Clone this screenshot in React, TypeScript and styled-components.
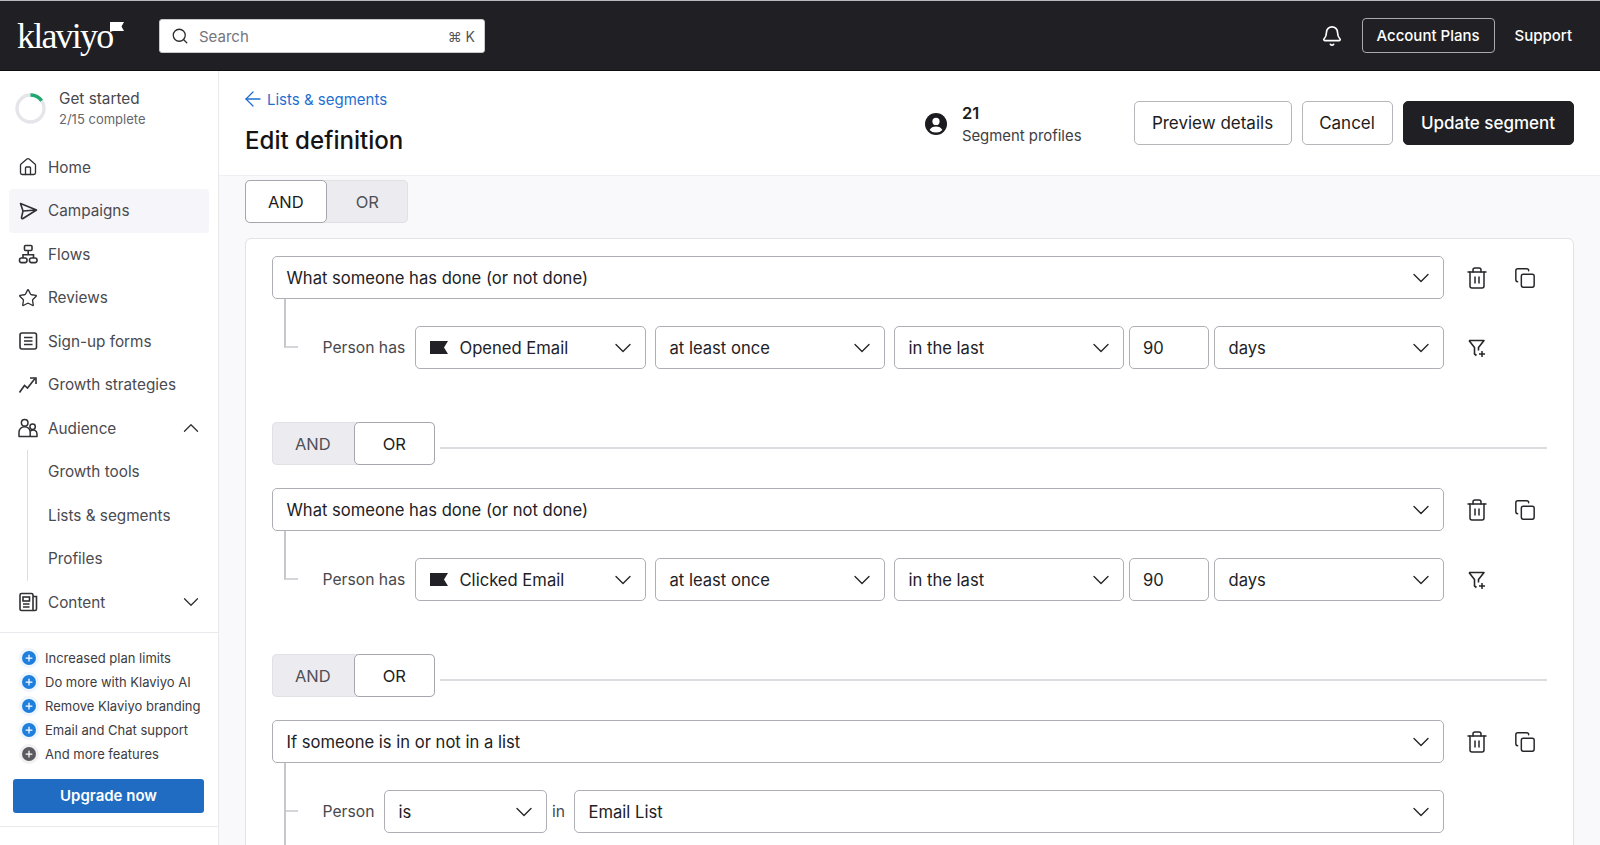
import React from "react";
import styled, { createGlobalStyle } from "styled-components";
import {
  ArrowLeft,
  Bell,
  ChevronDown,
  ChevronUp,
  Copy,
  House,
  Plus,
  Search,
  Star,
  Trash2,
} from "lucide-react";

const GlobalStyle = createGlobalStyle`
  html, body {
    margin: 0;
    padding: 0;
    height: 100%;
    overflow: hidden;
    background: #fff;
  }
  body {
    font-family: Inter, "Noto Sans", "Liberation Sans", sans-serif;
    color: #1c1c20;
    -webkit-font-smoothing: antialiased;
  }
  * { box-sizing: border-box; }
`;

const Page = styled.div`
  width: 1600px;
  height: 845px;
  overflow: hidden;
  display: flex;
  flex-direction: column;
`;

/* top bar */
const TopBar = styled.header`
  height: 71px;
  flex: none;
  background: #1f1f24;
  border-top: 1px solid #b9b9bd;
  border-bottom: 1px solid #0e0e10;
  display: flex;
  align-items: center;
  padding: 0 28px 0 17px;
`;

const Logo = styled.div`
  width: 142px;
  flex: none;
  display: flex;
  align-items: flex-start;
  color: #fff;
  font-family: "Liberation Serif", serif;
  font-size: 36px;
  letter-spacing: -1.8px;
  line-height: 40px;
  svg {
    margin: 6px 0 0 -2px;
  }
`;

const SearchBox = styled.div`
  width: 326px;
  height: 34px;
  background: #fff;
  border: 1px solid #c9c9ce;
  border-radius: 3px;
  display: flex;
  align-items: center;
  gap: 10px;
  padding: 1px 9px 0 11px;
  color: #75757c;
  font-size: 15px;
  svg {
    color: #2a2a2e;
  }
`;

const SearchHint = styled.span`
  margin-left: auto;
  font-size: 14px;
  color: #55555b;
`;

const TopActions = styled.div`
  margin-left: auto;
  display: flex;
  align-items: center;
  color: #fff;
  font-size: 15px;
  font-weight: 500;
`;

const PlansButton = styled.div`
  width: 133px;
  height: 35px;
  margin: 0 20px 0 19px;
  display: flex;
  align-items: center;
  justify-content: center;
  border: 1.5px solid #a9a9ae;
  border-radius: 4px;
`;

/* app body */
const Body = styled.div`
  flex: 1;
  min-height: 0;
  display: flex;
`;

const Sidebar = styled.aside`
  width: 219px;
  flex: none;
  background: #fff;
  border-right: 1px solid #e9e9ed;
  display: flex;
  flex-direction: column;
`;

const GetStarted = styled.div`
  height: 74.5px;
  flex: none;
  display: flex;
  align-items: center;
  gap: 13px;
  padding: 1px 0 0 15px;
`;

const GetStartedTitle = styled.div`
  font-size: 15.3px;
  line-height: 20px;
  color: #47474d;
`;

const GetStartedSub = styled.div`
  font-size: 13px;
  line-height: 20px;
  color: #66666c;
`;

const Nav = styled.nav`
  margin: 0 9px;
`;

const NavItem = styled.div<{ $active?: boolean }>`
  height: 43.5px;
  display: flex;
  align-items: center;
  gap: 10px;
  padding: 0 9px;
  border-radius: 4px;
  font-size: 15.3px;
  color: #4a4a50;
  background: ${(p) => (p.$active ? "#f6f6fa" : "transparent")};
  svg {
    flex: none;
    color: #303035;
  }
`;

const NavChevron = styled.span`
  margin-left: auto;
  display: flex;
  margin-right: -4px;
`;

const SubNav = styled.div`
  margin-left: 18px;
  padding-left: 20px;
  border-left: 1px solid #dedee2;
`;

const SubItem = styled.div`
  height: 43.5px;
  display: flex;
  align-items: center;
  font-size: 15.3px;
  color: #4a4a50;
`;

const PlanBox = styled.div`
  margin-top: 7.5px;
  padding: 13px 14px 13px 13px;
  border-top: 1px solid #e9e9ed;
  border-bottom: 1px solid #e9e9ed;
`;

const PlanRow = styled.div`
  height: 24px;
  display: flex;
  align-items: center;
  gap: 9px;
  padding-left: 10px;
  margin-left: -1px;
  font-size: 13px;
  color: #3c3c42;
  white-space: nowrap;
`;

const PlanDot = styled.span<{ $muted?: boolean }>`
  width: 14px;
  height: 14px;
  flex: none;
  border-radius: 50%;
  display: flex;
  align-items: center;
  justify-content: center;
  color: #fff;
  background: ${(p) => (p.$muted ? "#5a5a60" : "#1f7fdc")};
  box-shadow: 0 0 0 3px ${(p) => (p.$muted ? "#f1f1f3" : "#eef5fd")};
`;

const UpgradeButton = styled.div`
  height: 34px;
  margin-top: 13px;
  background: #1f6cc2;
  border-radius: 3px;
  color: #fff;
  font-size: 15px;
  font-weight: 600;
  display: flex;
  align-items: center;
  justify-content: center;
`;

/* main */
const Main = styled.main`
  flex: 1;
  min-width: 0;
  background: #f9f9fc;
  display: flex;
  flex-direction: column;
`;

const Header = styled.div`
  height: 105px;
  flex: none;
  background: #fff;
  border-bottom: 1px solid #efeff3;
  display: flex;
  align-items: flex-start;
  padding: 0 26.5px 0 26px;
`;

const BackLink = styled.div`
  display: flex;
  align-items: center;
  gap: 2px;
  margin: 18px 0 0 -4px;
  height: 20px;
  color: #1f6fd0;
  font-size: 15px;
`;

const Title = styled.h1`
  margin: 14px 0 0;
  font-size: 24.1px;
  line-height: 36px;
  font-weight: 500;
  color: #141417;
`;

const HeaderRight = styled.div`
  margin-left: auto;
  display: flex;
  align-items: center;
  padding-top: 28px;
`;

const ProfileCount = styled.div`
  display: flex;
  align-items: center;
  gap: 15px;
  margin: 2px 42px 0 0;
  svg {
    flex: none;
  }
`;

const CountValue = styled.div`
  font-size: 16.5px;
  line-height: 24px;
  font-weight: 600;
`;

const CountLabel = styled.div`
  font-size: 14.9px;
  line-height: 22px;
  color: #3e3e44;
`;

const HeaderButton = styled.div<{ $primary?: boolean; $w: number }>`
  width: ${(p) => p.$w}px;
  height: 44px;
  margin-left: 10px;
  display: flex;
  align-items: center;
  justify-content: center;
  font-size: 17px;
  border-radius: 5px;
  border: 1px solid ${(p) => (p.$primary ? "#1f1f24" : "#b5b5ba")};
  background: ${(p) => (p.$primary ? "#1f1f24" : "#fff")};
  color: ${(p) => (p.$primary ? "#fff" : "#1c1c20")};
  font-weight: ${(p) => (p.$primary ? 500 : 400)};
`;

const Content = styled.div`
  flex: 1;
  min-height: 0;
  padding: 4px 26.5px 0 26px;
`;

const Toggle = styled.div`
  width: 163px;
  height: 43px;
  flex: none;
  display: flex;
  background: #ececf0;
  border-radius: 5px;
  box-shadow: inset 0 0 0 1px #e0e0e5;
`;

const ToggleOption = styled.div<{ $on?: boolean }>`
  width: 81.5px;
  display: flex;
  align-items: center;
  justify-content: center;
  font-size: 16.5px;
  border-radius: 5px;
  color: ${(p) => (p.$on ? "#1c1c20" : "#505056")};
  background: ${(p) => (p.$on ? "#fff" : "transparent")};
  border: ${(p) => (p.$on ? "1px solid #a6a6ac" : "none")};
`;

const Card = styled.section`
  margin-top: 15px;
  height: 700px;
  background: #fff;
  border: 1px solid #e2e2e7;
  border-radius: 6px;
  padding: 17px 26px 0;
`;

const RuleRow = styled.div`
  display: flex;
  align-items: center;
`;

const SelectBox = styled.div<{ $w?: number; $tight?: boolean }>`
  height: 43px;
  ${(p) => (p.$w ? `width: ${p.$w}px; flex: none;` : "flex: 1;")}
  ${(p) => (p.$tight ? "margin: 0 -4px;" : "")}
  display: flex;
  align-items: center;
  gap: 12px;
  padding: 0 14px 0 13.5px;
  background: #fff;
  border: 1px solid #aeaeb4;
  border-radius: 5px;
  font-size: 16.6px;
  color: #222226;
  white-space: nowrap;
  > svg:last-child {
    margin-left: auto;
    flex: none;
    margin-right: -6px;
  }
`;

const Actions = styled.div`
  width: 82px;
  flex: none;
  margin-left: 21px;
  display: flex;
  align-items: center;
  gap: 25px;
  svg {
    flex: none;
    color: #26262a;
  }
`;

const Branch = styled.div`
  display: flex;
`;

const Elbow = styled.div<{ $open?: boolean }>`
  position: relative;
  width: 14px;
  height: 49px;
  margin-left: 12px;
  flex: none;
  border-left: 2px solid #c6c6cc;
  border-bottom: 2px solid #d6d6da;
  &::after {
    content: "";
    display: ${(p) => (p.$open ? "block" : "none")};
    position: absolute;
    left: -2px;
    top: 100%;
    width: 2px;
    height: 120px;
    background: #c6c6cc;
  }
`;

const Fields = styled.div`
  flex: 1;
  min-width: 0;
  display: flex;
  align-items: center;
  padding: 27px 0 0 24.5px;
`;

const FieldRow = styled.div`
  width: 1121.5px;
  flex: none;
  display: flex;
  align-items: center;
  gap: 9px;
`;

const FieldLabel = styled.span<{ $w: number; $pull?: boolean }>`
  width: ${(p) => p.$w}px;
  ${(p) => (p.$pull ? "margin-left: -4px;" : "")}
  flex: none;
  font-size: 15.7px;
  color: #48484e;
  white-space: nowrap;
`;

const FilterAction = styled.div`
  margin-left: 23px;
  display: flex;
`;

const Separator = styled.div`
  display: flex;
  gap: 5px;
  margin: 53px 0 23px;
`;

const SeparatorLine = styled.div`
  flex: 1;
  height: 1.5px;
  margin-top: 25px;
  background: #dcdce0;
`;

const FlagMark = () => (
  <svg width="18" height="13" viewBox="0 0 18 13" style={{ flex: "none" }}>
    <path d="M0 0h18l-4 6.5 4 6.5H0z" fill="#222226" />
  </svg>
);

const Caret = () => <ChevronDown size={28} strokeWidth={1.2} color="#26262a" />;

const FormIcon = () => (
  <svg width="20" height="20" viewBox="0 0 20 20" fill="none" stroke="currentColor" strokeWidth="1.6">
    <rect x="2" y="2" width="16.5" height="16" rx="2" />
    <path d="M6 6.5h8.5M6 10h8.5M6 13.5h8.5" />
  </svg>
);

const PlaneIcon = () => (
  <svg width="20" height="20" viewBox="0 0 20 20" fill="none" stroke="currentColor" strokeWidth="1.6" strokeLinejoin="round">
    <path d="M2.5 2.5l16 6.5-13.5 8.5a1 1 0 0 1-1.5-1L5 10zM5 10l13.5-1" />
  </svg>
);

const FlowsIcon = () => (
  <svg width="20" height="20" viewBox="0 0 20 20" fill="none" stroke="currentColor" strokeWidth="1.6">
    <rect x="6.5" y="1.5" width="7.5" height="5" rx="1" />
    <path d="M10.2 6.5v4.2M5 14v-3.3h10.5V14" />
    <rect x="1.5" y="14" width="7.5" height="4.6" rx="2" />
    <rect x="11.5" y="14" width="7.5" height="4.6" rx="2" />
  </svg>
);

const GrowthIcon = () => (
  <svg width="20" height="20" viewBox="0 0 20 20" fill="none" stroke="currentColor" strokeWidth="1.6">
    <path d="M1.5 17.5l5-7 3 2.5 7.5-9.5" />
    <path d="M12 3h6v6" />
  </svg>
);

const AudienceIcon = () => (
  <svg width="20" height="20" viewBox="0 0 20 20" fill="none" stroke="currentColor" strokeWidth="1.5" strokeLinejoin="round">
    <circle cx="6.7" cy="4.8" r="3.3" />
    <circle cx="14.6" cy="8.8" r="2.7" />
    <path d="M1 18.5v-4.2a5.6 5.6 0 0 1 11.2 0v4.2zM12.2 18.5H19v-2.7a3.8 3.8 0 0 0-6.4-2.8" />
  </svg>
);

const ContentIcon = () => (
  <svg width="20" height="20" viewBox="0 0 20 20" fill="none" stroke="currentColor" strokeWidth="1.6">
    <path d="M15 4.5h3.5V17a1.5 1.5 0 0 1-1.5 1.5H3.5A1.5 1.5 0 0 1 2 17V3a1.5 1.5 0 0 1 1.5-1.5h10A1.5 1.5 0 0 1 15 3v15.5" />
    <rect x="5" y="5" width="6.5" height="4" />
    <path d="M5 12h6.5M5 15h6.5" />
  </svg>
);

const ProfileIcon = () => (
  <svg width="22" height="22" viewBox="0 0 22 22">
    <circle cx="11" cy="11" r="11" fill="#1c1c20" />
    <circle cx="11" cy="8.4" r="3.6" fill="#fff" />
    <path d="M4.6 17c1.2-2.5 3.6-3.6 6.4-3.6s5.2 1.1 6.4 3.6A8.4 8.4 0 0 1 11 19.6 8.4 8.4 0 0 1 4.6 17z" fill="#fff" />
  </svg>
);

const FilterPlusIcon = () => (
  <svg width="20" height="20" viewBox="0 0 20 20" fill="none" stroke="#26262a" strokeWidth="1.6" strokeLinejoin="round">
    <path d="M2 2.5h15l-5.5 7v3M2 2.5l5.5 7V16l2 1.5" />
    <path d="M15 13v6M12 16h6" strokeWidth="1.5" />
  </svg>
);

const ProgressRing = () => (
  <svg width="31" height="31" viewBox="0 0 31 31" fill="none" strokeWidth="3.4" style={{ flex: "none" }}>
    <circle cx="15.5" cy="15.5" r="13.5" stroke="#e6e6ea" />
    <path d="M15.5 2a13.5 13.5 0 0 1 11.1 5.8" stroke="#1fa971" />
  </svg>
);

const navItems = [
  { label: "Home", icon: <House size={20} strokeWidth={1.6} /> },
  { label: "Campaigns", icon: <PlaneIcon />, active: true },
  { label: "Flows", icon: <FlowsIcon /> },
  { label: "Reviews", icon: <Star size={20} strokeWidth={1.6} /> },
  { label: "Sign-up forms", icon: <FormIcon /> },
  { label: "Growth strategies", icon: <GrowthIcon /> },
];

const planItems = [
  "Increased plan limits",
  "Do more with Klaviyo AI",
  "Remove Klaviyo branding",
  "Email and Chat support",
];

const RuleActions = () => (
  <Actions>
    <Trash2 size={24} strokeWidth={1.5} />
    <Copy size={22} strokeWidth={1.6} />
  </Actions>
);

function EventRule({ eventName }: { eventName: string }) {
  return (
    <>
      <RuleRow>
        <SelectBox>
          What someone has done (or not done)
          <Caret />
        </SelectBox>
        <RuleActions />
      </RuleRow>
      <Branch>
        <Elbow />
        <Fields>
          <FieldRow>
            <FieldLabel $w={83.5}>Person has</FieldLabel>
            <SelectBox $w={231}>
              <FlagMark />
              {eventName}
              <Caret />
            </SelectBox>
            <SelectBox $w={230}>
              at least once
              <Caret />
            </SelectBox>
            <SelectBox $w={229.5}>
              in the last
              <Caret />
            </SelectBox>
            <SelectBox $w={80.5} $tight>
              90
            </SelectBox>
            <SelectBox>
              days
              <Caret />
            </SelectBox>
          </FieldRow>
          <FilterAction>
            <FilterPlusIcon />
          </FilterAction>
        </Fields>
      </Branch>
    </>
  );
}

const OrSeparator = () => (
  <Separator>
    <Toggle>
      <ToggleOption>AND</ToggleOption>
      <ToggleOption $on>OR</ToggleOption>
    </Toggle>
    <SeparatorLine />
  </Separator>
);

export default function App() {
  return (
    <Page>
      <GlobalStyle />
      <TopBar>
        <Logo>
          klaviyo
          <svg width="14" height="10" viewBox="0 0 14 10">
            <path d="M0 0h14l-2.5 4.5L14 9H3L0 10z" fill="#fff" />
          </svg>
        </Logo>
        <SearchBox>
          <Search size={18} strokeWidth={1.7} />
          Search
          <SearchHint>⌘ K</SearchHint>
        </SearchBox>
        <TopActions>
          <Bell size={22} strokeWidth={1.8} />
          <PlansButton>Account Plans</PlansButton>
          Support
        </TopActions>
      </TopBar>
      <Body>
        <Sidebar>
          <GetStarted>
            <ProgressRing />
            <div>
              <GetStartedTitle>Get started</GetStartedTitle>
              <GetStartedSub>2/15 complete</GetStartedSub>
            </div>
          </GetStarted>
          <Nav>
            {navItems.map((item) => (
              <NavItem key={item.label} $active={item.active}>
                {item.icon}
                {item.label}
              </NavItem>
            ))}
            <NavItem>
              <AudienceIcon />
              Audience
              <NavChevron>
                <ChevronUp size={26} strokeWidth={1.2} />
              </NavChevron>
            </NavItem>
            <SubNav>
              <SubItem>Growth tools</SubItem>
              <SubItem>Lists &amp; segments</SubItem>
              <SubItem>Profiles</SubItem>
            </SubNav>
            <NavItem>
              <ContentIcon />
              Content
              <NavChevron>
                <ChevronDown size={26} strokeWidth={1.2} />
              </NavChevron>
            </NavItem>
          </Nav>
          <PlanBox>
            {planItems.map((text) => (
              <PlanRow key={text}>
                <PlanDot>
                  <Plus size={10} strokeWidth={3} />
                </PlanDot>
                {text}
              </PlanRow>
            ))}
            <PlanRow>
              <PlanDot $muted>
                <Plus size={10} strokeWidth={3} />
              </PlanDot>
              And more features
            </PlanRow>
            <UpgradeButton>Upgrade now</UpgradeButton>
          </PlanBox>
        </Sidebar>
        <Main>
          <Header>
            <div>
              <BackLink>
                <ArrowLeft size={24} strokeWidth={1.3} />
                Lists &amp; segments
              </BackLink>
              <Title>Edit definition</Title>
            </div>
            <HeaderRight>
              <ProfileCount>
                <ProfileIcon />
                <div>
                  <CountValue>21</CountValue>
                  <CountLabel>Segment profiles</CountLabel>
                </div>
              </ProfileCount>
              <HeaderButton $w={158}>Preview details</HeaderButton>
              <HeaderButton $w={91}>Cancel</HeaderButton>
              <HeaderButton $w={171} $primary>
                Update segment
              </HeaderButton>
            </HeaderRight>
          </Header>
          <Content>
            <Toggle>
              <ToggleOption $on>AND</ToggleOption>
              <ToggleOption>OR</ToggleOption>
            </Toggle>
            <Card>
              <EventRule eventName="Opened Email" />
              <OrSeparator />
              <EventRule eventName="Clicked Email" />
              <OrSeparator />
              <RuleRow>
                <SelectBox>
                  If someone is in or not in a list
                  <Caret />
                </SelectBox>
                <RuleActions />
              </RuleRow>
              <Branch>
                <Elbow $open />
                <Fields>
                  <FieldRow>
                    <FieldLabel $w={52.5}>Person</FieldLabel>
                    <SelectBox $w={163}>
                      is
                      <Caret />
                    </SelectBox>
                    <FieldLabel $w={13} $pull>
                      in
                    </FieldLabel>
                    <SelectBox>
                      Email List
                      <Caret />
                    </SelectBox>
                  </FieldRow>
                </Fields>
              </Branch>
            </Card>
          </Content>
        </Main>
      </Body>
    </Page>
  );
}
